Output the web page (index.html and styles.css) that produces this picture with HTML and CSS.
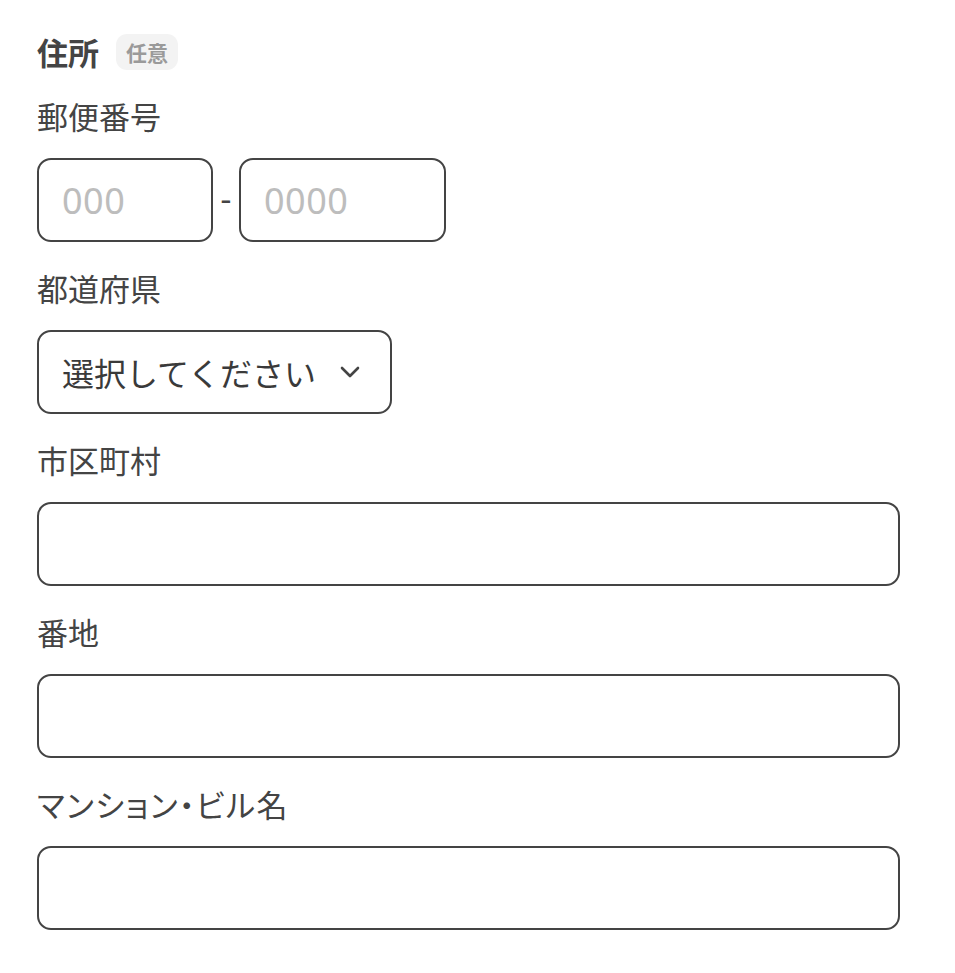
FILE: index.html
```html
<!DOCTYPE html>
<html lang="ja">
<head>
<meta charset="utf-8">
<link rel="stylesheet" href="styles.css">
</head>
<body>
<div class="form">
  <div class="heading">
    <span class="title">住所</span>
    <span class="badge">任意</span>
  </div>
  <div class="field first">
    <div class="label">郵便番号</div>
    <div class="postal">
      <div class="input short1"><span class="ph">000</span></div>
      <span class="dash">-</span>
      <div class="input short2"><span class="ph">0000</span></div>
    </div>
  </div>
  <div class="field">
    <div class="label">都道府県</div>
    <div class="input select">
      <span class="sel-text">選択してください</span>
      <svg class="chev" width="20" height="12" viewBox="0 0 20 12"><path d="M2 2 L10 10 L18 2" fill="none" stroke="#444" stroke-width="2.6" stroke-linecap="round" stroke-linejoin="round"/></svg>
    </div>
  </div>
  <div class="field">
    <div class="label">市区町村</div>
    <div class="input wide"></div>
  </div>
  <div class="field">
    <div class="label">番地</div>
    <div class="input wide"></div>
  </div>
  <div class="field">
    <div class="label prop">マンション・ビル名</div>
    <div class="input wide"></div>
  </div>
</div>
</body>
</html>
```
FILE: styles.css
```css
html, body {
  margin: 0;
  padding: 0;
  background: #fff;
}
body {
  font-family: "Noto Sans CJK JP", "Noto Sans", sans-serif;
  color: #444;
}
.form {
  padding: 34px 37px 0 37px;
  width: 863px;
}
.heading {
  display: flex;
  align-items: center;
  height: 36px;
  gap: 17px;
}
.title {
  font-size: 31px;
  font-weight: 700;
  line-height: 34px;
  color: #444;
}
.badge {
  display: flex;
  align-items: center;
  height: 36px;
  padding: 0 10px;
  background: #f3f3f3;
  border-radius: 11px;
  font-size: 21px;
  font-weight: 700;
  color: #9a9a9a;
}
.field {
  display: flex;
  flex-direction: column;
  align-items: flex-start;
  margin-top: 28px;
}
.label {
  font-size: 31px;
  line-height: 36px;
  height: 36px;
  margin-bottom: 24px;
  color: #444;
}
.label.prop {
  font-feature-settings: "palt";
  letter-spacing: 1.5px;
}
.input {
  box-sizing: border-box;
  height: 84px;
  border: 2px solid #444;
  border-radius: 14px;
  display: flex;
  align-items: center;
  padding: 0 23px;
}
.postal {
  display: flex;
  align-items: center;
}
.short1 { width: 176px; }
.short2 { width: 207px; }
.dash {
  width: 26px;
  text-align: center;
  font-size: 34px;
  color: #444;
  font-family: "Liberation Sans", sans-serif;
  line-height: 34px;
  padding-bottom: 2px;
}
.ph {
  font-family: "Noto Sans", sans-serif;
  font-size: 36px;
  color: #bdbdbd;
  letter-spacing: 0.5px;
}
.select {
  width: 355px;
  justify-content: space-between;
  padding-right: 30px;
}
.sel-text {
  font-size: 32px;
  color: #3a3a3a;
}
.chev {
  display: block;
}
.wide {
  width: 863px;
}
```
